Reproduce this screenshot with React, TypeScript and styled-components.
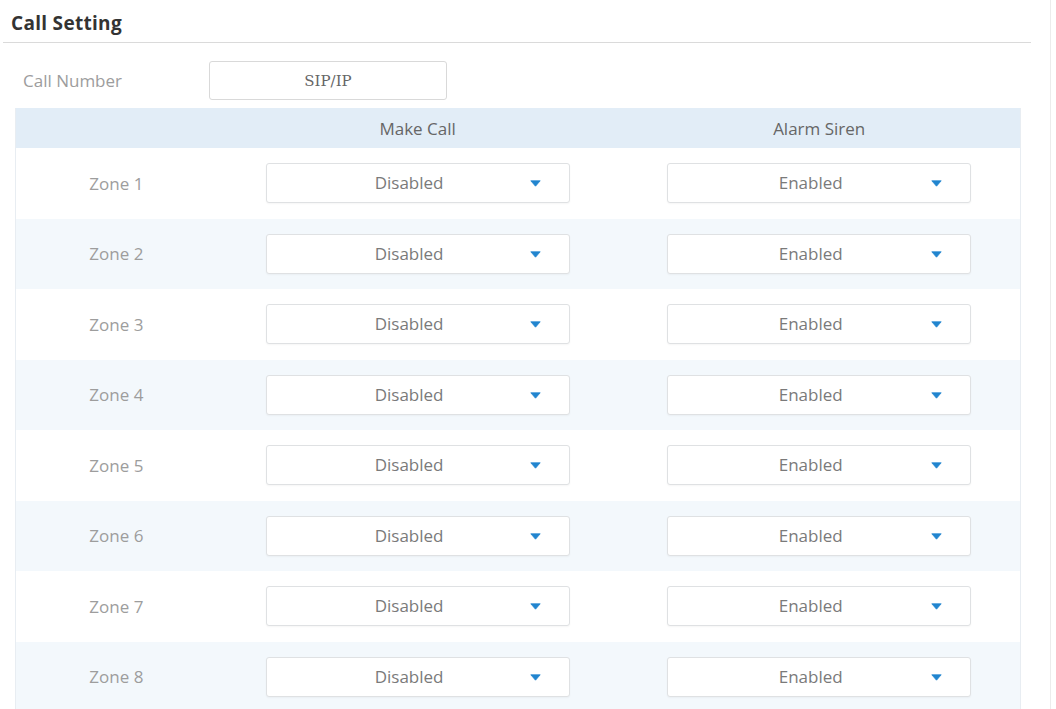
import React from "react";
import styled, { createGlobalStyle } from "styled-components";

const GlobalStyle = createGlobalStyle`
  html, body {
    margin: 0;
    padding: 0;
    background: #ffffff;
  }
  body {
    font-family: "Open Sans", "Liberation Sans", sans-serif;
    -webkit-font-smoothing: antialiased;
  }
  * { box-sizing: border-box; }
`;

const Page = styled.div`
  width: 1051px;
  min-height: 709px;
  border-right: 1px solid #ececec;
  overflow: hidden;
`;

const SectionTitle = styled.h2`
  margin: 0 19px 0 3px;
  height: 43px;
  padding: 4px 0 0 8px;
  display: flex;
  align-items: center;
  border-bottom: 1px solid #dadada;
  font-family: "Open Sans", "DejaVu Sans", sans-serif;
  font-weight: 700;
  font-size: 19px;
  letter-spacing: 0.3px;
  color: #333333;
`;

const FieldRow = styled.div`
  display: flex;
  align-items: center;
  padding: 18px 0 0 23px;
`;

const FieldLabel = styled.div`
  width: 186px;
  font-size: 17px;
  color: #9d9d9d;
`;

const TextBox = styled.div`
  width: 238px;
  height: 39px;
  border: 1px solid #d9d9d9;
  border-radius: 3px;
  display: flex;
  align-items: center;
  justify-content: center;
  font-family: "DejaVu Serif", "Liberation Serif", serif;
  font-size: 15px;
  color: #666666;
`;

const Table = styled.div`
  margin: 8px 0 0 15px;
  width: 1006px;
  border-left: 1px solid #e8edf2;
  border-right: 1px solid #e8edf2;
`;

const HeaderRow = styled.div`
  display: grid;
  grid-template-columns: 20% 40% 40%;
  height: 40px;
  align-items: center;
  background: #e2edf7;
`;

const HeaderCell = styled.div`
  text-align: center;
  font-size: 17px;
  color: #666666;
`;

const Row = styled.div<{ $striped: boolean }>`
  display: grid;
  grid-template-columns: 20% 40% 40%;
  height: 70.5px;
  align-items: center;
  background: ${(p) => (p.$striped ? "#f3f8fc" : "#ffffff")};
`;

const ZoneLabel = styled.div`
  text-align: center;
  font-size: 17px;
  color: #9d9d9d;
`;

const Cell = styled.div`
  display: flex;
  justify-content: center;
  align-items: center;
`;

const Select = styled.div`
  position: relative;
  width: 304px;
  height: 40px;
  padding-right: 17px;
  border: 1px solid #dfe1e3;
  border-radius: 3px;
  background: #ffffff;
  box-shadow: 0 1px 2px rgba(0, 0, 0, 0.04);
  text-align: center;
  line-height: 38px;
  font-size: 17px;
  color: #7a7a7a;
`;

const Caret = styled.svg`
  position: absolute;
  right: 28px;
  top: 50%;
  margin-top: -3px;
  width: 11px;
  height: 7px;
`;

const zones = [1, 2, 3, 4, 5, 6, 7, 8];

function Dropdown({ value }: { value: string }) {
  return (
    <Select>
      {value}
      <Caret viewBox="0 0 11 7">
        <path d="M0.8 0.8 H10.2 L5.5 6.2 Z" fill="#2185cf" stroke="#2185cf" strokeWidth="0.8" strokeLinejoin="round" />
      </Caret>
    </Select>
  );
}

export default function App() {
  return (
    <Page>
      <GlobalStyle />
      <SectionTitle>Call Setting</SectionTitle>
      <FieldRow>
        <FieldLabel>Call Number</FieldLabel>
        <TextBox>SIP/IP</TextBox>
      </FieldRow>
      <Table>
        <HeaderRow>
          <HeaderCell />
          <HeaderCell>Make Call</HeaderCell>
          <HeaderCell>Alarm Siren</HeaderCell>
        </HeaderRow>
        {zones.map((z) => (
          <Row key={z} $striped={z % 2 === 0}>
            <ZoneLabel>Zone {z}</ZoneLabel>
            <Cell>
              <Dropdown value="Disabled" />
            </Cell>
            <Cell>
              <Dropdown value="Enabled" />
            </Cell>
          </Row>
        ))}
      </Table>
    </Page>
  );
}
